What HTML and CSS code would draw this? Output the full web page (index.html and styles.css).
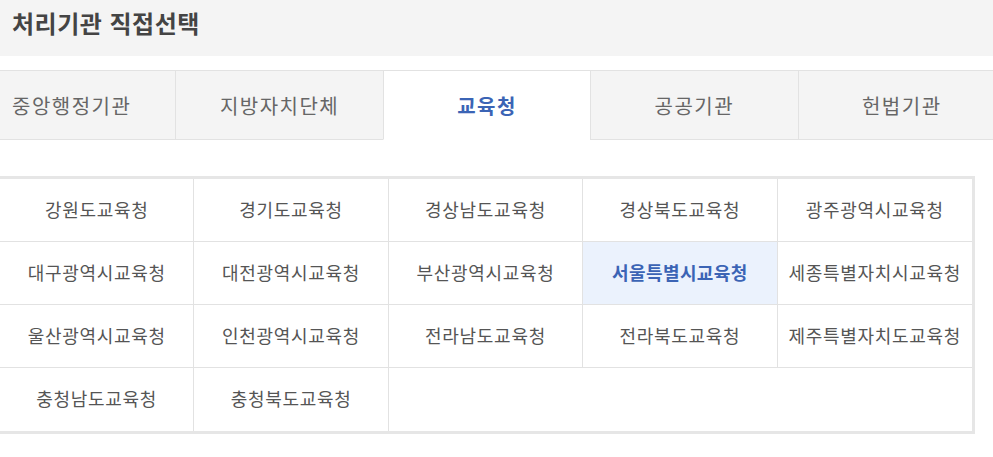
FILE: index.html
```html
<!DOCTYPE html>
<html lang="ko">
<head>
    <meta charset="UTF-8">
    <meta name="viewport" content="width=device-width, initial-scale=1.0">
    <title>처리기관 직접선택</title>
    <link rel="stylesheet" href="styles.css">
</head>
<body>
    <div class="page">
        <div class="title-bar">
            <h2>처리기관 직접선택</h2>
        </div>

        <ul class="tabs">
            <li>중앙행정기관</li>
            <li>지방자치단체</li>
            <li class="active">교육청</li>
            <li>공공기관</li>
            <li>헌법기관</li>
        </ul>

        <ul class="org-grid">
            <li>강원도교육청</li>
            <li>경기도교육청</li>
            <li>경상남도교육청</li>
            <li>경상북도교육청</li>
            <li>광주광역시교육청</li>
            <li>대구광역시교육청</li>
            <li>대전광역시교육청</li>
            <li>부산광역시교육청</li>
            <li class="selected">서울특별시교육청</li>
            <li>세종특별자치시교육청</li>
            <li>울산광역시교육청</li>
            <li>인천광역시교육청</li>
            <li>전라남도교육청</li>
            <li>전라북도교육청</li>
            <li>제주특별자치도교육청</li>
            <li>충청남도교육청</li>
            <li>충청북도교육청</li>
        </ul>
    </div>
</body>
</html>
```

FILE: styles.css
```css
:root {
    --bar-bg: #f4f4f4;
    --line: #e2e2e2;
    --outer-line: #e6e6e6;
    --text: #555;
    --tab-text: #666;
    --blue: #3b64b5;
    --selected-bg: #ebf2fd;
}

body {
    margin: 0;
    font-family: "Noto Sans CJK KR", "Noto Sans", sans-serif;
    background: #fff;
    color: var(--text);
    overflow: hidden;
}

.page {
    width: 993px;
}

.title-bar {
    background: var(--bar-bg);
    height: 56px;
    display: flex;
    align-items: center;
    padding: 0 12px;
    box-sizing: border-box;
}

.title-bar h2 {
    margin: 0 0 12px;
    font-size: 24px;
    font-weight: bold;
    color: #444;
    letter-spacing: 0.5px;
}

ul {
    list-style: none;
    margin: 0;
    padding: 0;
}

.tabs {
    display: grid;
    grid-template-columns: repeat(5, 207.4px);
    margin: 14px 0 0 -32px;
    border-top: 1px solid var(--line);
}

.tabs li {
    height: 68px;
    display: flex;
    align-items: center;
    justify-content: center;
    background: var(--bar-bg);
    border-left: 1px solid var(--line);
    border-bottom: 1px solid var(--line);
    font-size: 20px;
    letter-spacing: 1.5px;
    color: var(--tab-text);
}

.tabs li:first-child {
    border-left: none;
}

.tabs li.active {
    background: #fff;
    border-bottom-color: #fff;
    color: var(--blue);
    font-weight: bold;
}

.org-grid {
    display: grid;
    grid-template-columns: repeat(5, 1fr);
    width: 972px;
    margin: 36px 0 0 -3px;
    border: 3px solid var(--outer-line);
}

.org-grid li {
    height: 63px;
    box-sizing: border-box;
    padding-bottom: 3px;
    display: flex;
    align-items: center;
    justify-content: center;
    border-right: 1px solid var(--line);
    border-bottom: 1px solid var(--line);
    font-size: 18px;
    letter-spacing: 0.7px;
    color: var(--text);
    white-space: nowrap;
}

.org-grid li:nth-child(5n) {
    border-right: none;
}

.org-grid li:nth-child(n+16) {
    border-bottom: none;
}

.org-grid li.selected {
    background: var(--selected-bg);
    color: var(--blue);
    font-weight: bold;
    letter-spacing: 0.4px;
}
```
